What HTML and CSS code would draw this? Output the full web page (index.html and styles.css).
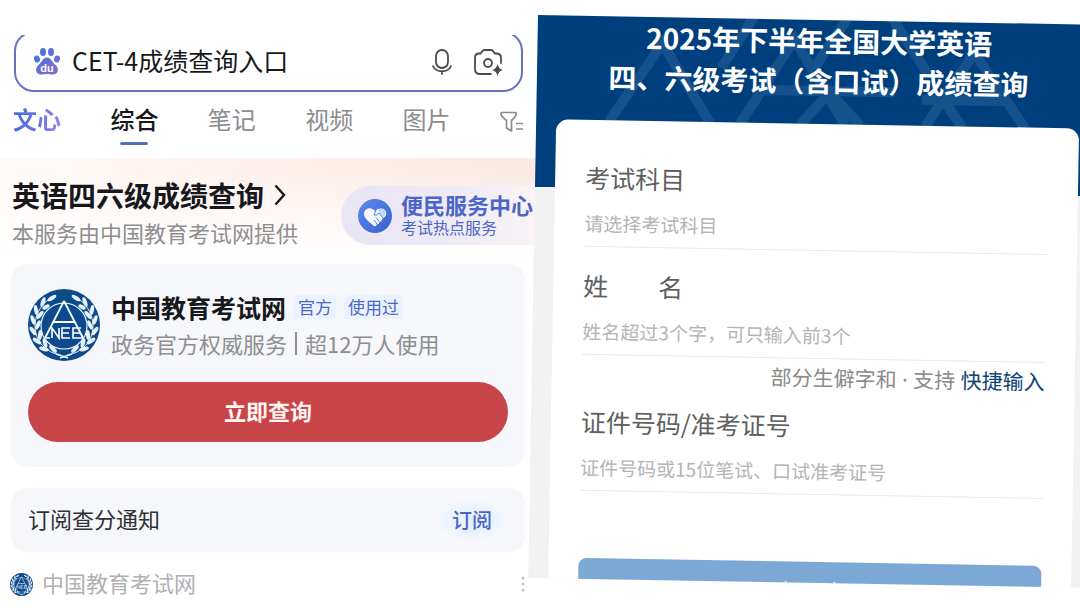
FILE: index.html
```
<!DOCTYPE html>
<html lang="zh-CN">
<head>
    <meta charset="UTF-8">
    <meta name="viewport" content="width=device-width, initial-scale=1.0">
    <title>CET-4成绩查询入口</title>
    <link rel="stylesheet" href="styles.css">
</head>
<body>
    <!-- Shared emblem -->
    <svg class="defs" width="0" height="0" aria-hidden="true">
        <symbol id="emblem" viewBox="0 0 72 72">
            <circle cx="36" cy="36" r="36" fill="#0d4a8c"/>
            <circle cx="36" cy="37" r="23" fill="none" stroke="#e6f1fa" stroke-width="1.2"/>
            <path d="M36 12 L17 49 M36 12 L55 49 M26 33 H46" fill="none" stroke="#fff" stroke-width="1.8"/>
            <path d="M18 49 H22 M24 49 V39 L31 49 V39 M42 39 H34 V49 H42 M34 44 H41 M53 39 H45 V49 H55 M45 44 H52" fill="none" stroke="#fff" stroke-width="1.6"/>
            <g id="branch" fill="#e6f1fa">
                <path d="M33 66 C18 64 7 52 7 37 C7 27 12 17 20 11" fill="none" stroke="#e6f1fa" stroke-width="1"/>
                <ellipse cx="24" cy="9" rx="5" ry="2" transform="rotate(-32 24 9)"/>
                <ellipse cx="15" cy="13" rx="5" ry="2" transform="rotate(-70 15 13)"/>
                <ellipse cx="18" cy="18" rx="4" ry="2" transform="rotate(-30 18 18)"/>
                <ellipse cx="8" cy="21" rx="5" ry="2" transform="rotate(-100 8 21)"/>
                <ellipse cx="12" cy="26" rx="5" ry="2" transform="rotate(-50 12 26)"/>
                <ellipse cx="5" cy="31" rx="5" ry="2" transform="rotate(70 5 31)"/>
                <ellipse cx="10" cy="36" rx="5" ry="2" transform="rotate(-65 10 36)"/>
                <ellipse cx="5" cy="42" rx="5" ry="2" transform="rotate(55 5 42)"/>
                <ellipse cx="12" cy="46" rx="5" ry="2" transform="rotate(-85 12 46)"/>
                <ellipse cx="9" cy="52" rx="5" ry="2" transform="rotate(35 9 52)"/>
                <ellipse cx="17" cy="54" rx="5" ry="2" transform="rotate(75 17 54)"/>
                <ellipse cx="16" cy="60" rx="5" ry="2" transform="rotate(15 16 60)"/>
                <ellipse cx="25" cy="60" rx="5" ry="2" transform="rotate(45 25 60)"/>
                <path d="M28 65 L40 69" stroke="#e6f1fa" stroke-width="1.5"/>
            </g>
            <use href="#branch" transform="translate(72 0) scale(-1 1)"/>
        </symbol>
    </svg>

    <main class="search-page">
        <div class="search-wrap">
            <form class="search-box">
                <svg class="paw" viewBox="0 0 26 27" aria-hidden="true">
                    <defs>
                        <linearGradient id="pawFill" x1="0" y1="0" x2="26" y2="27" gradientUnits="userSpaceOnUse">
                            <stop offset="0" stop-color="#3f74e0"/>
                            <stop offset="1" stop-color="#8a6bcc"/>
                        </linearGradient>
                    </defs>
                    <g fill="url(#pawFill)">
                        <ellipse cx="9" cy="4" rx="3" ry="4"/>
                        <ellipse cx="17" cy="4" rx="3" ry="4"/>
                        <ellipse cx="3" cy="11" rx="3" ry="3.6" transform="rotate(-15 3 11)"/>
                        <ellipse cx="23" cy="11" rx="3" ry="3.6" transform="rotate(15 23 11)"/>
                        <path d="M13 9.500 C17 9.500 18 14 21 16.500 C26 20.500 24 26.500 19 26.500 C16.500 26.500 15 26 13 26 C11 26 9.500 26.500 7 26.500 C2 26.500 0 20.500 5 16.500 C8 14 9 9.500 13 9.500 Z"/>
                    </g>
                    <text class="paw-text" x="13" y="24" text-anchor="middle">du</text>
                </svg>
                <input class="search-input" type="text" aria-label="搜索" value="CET-4成绩查询入口">
                <button class="icon-button" type="button" aria-label="语音">
                    <svg width="22" height="28" viewBox="0 0 22 28" fill="none" stroke="#4b4b4d" stroke-width="1.8" stroke-linecap="round">
                        <rect x="5" y="2" width="12" height="18" rx="6"/>
                        <path d="M2 18 C5 25 17 25 20 18 M11 23.500 V26"/>
                    </svg>
                </button>
                <button class="icon-button" type="button" aria-label="拍照">
                    <svg width="30" height="28" viewBox="0 0 30 28" fill="none" stroke="#4b4b4d" stroke-width="1.8" stroke-linecap="round">
                        <path d="M18 26 H7 Q2 26 2 21 V10 Q2 5.500 6 5.500 H7.500 L9.500 3 Q10.200 2 11.500 2 H18 Q19.300 2 20 3 L22 5.500 H23.500 Q28 5.500 28 10 V15"/>
                        <circle cx="15" cy="15" r="4"/>
                        <path d="M24.500 16 Q25.500 21 30 22 Q25.500 23 24.500 28 Q23.500 23 19 22 Q23.500 21 24.500 16 Z" fill="#4b4b4d" stroke="none"/>
                    </svg>
                </button>
            </form>
        </div>

        <nav class="tabs">
            <a class="tab tab-ai" href="#">文心</a>
            <a class="tab tab-active" href="#">综合</a>
            <a class="tab" href="#">笔记</a>
            <a class="tab" href="#">视频</a>
            <a class="tab" href="#">图片</a>
            <button class="icon-button filter" type="button" aria-label="筛选">
                <svg width="24" height="22" viewBox="0 0 24 22" fill="none" stroke="#8b8c90" stroke-width="1.7" stroke-linejoin="round">
                    <path d="M2 1.500 H15 Q16.500 1.500 16 3.500 Q15.500 6 11.500 9.500 V20 L6.500 17 V9.500 Q1.500 5.500 1 3.500 Q.8 1.500 2 1.500 Z"/>
                    <path d="M16 12.500 H23 M16 18 H23"/>
                </svg>
            </button>
        </nav>

        <section class="hero">
            <div class="hero-text">
                <h1 class="hero-title">英语四六级成绩查询
                    <svg width="12" height="22" viewBox="0 0 12 22" fill="none" stroke="#18181c" stroke-width="2.400" aria-hidden="true"><path d="M1.500 1.500 L10 11 L1.500 20.500"/></svg>
                </h1>
                <p class="hero-sub">本服务由中国教育考试网提供</p>
            </div>
            <a class="service" href="#">
                <svg class="service-icon" viewBox="0 0 34 34" aria-hidden="true">
                    <defs>
                        <linearGradient id="disc" x1="0" y1="0" x2="1" y2="1">
                            <stop offset="0" stop-color="#5b8bee"/>
                            <stop offset="1" stop-color="#3c5fd0"/>
                        </linearGradient>
                    </defs>
                    <circle cx="17" cy="17" r="17" fill="url(#disc)"/>
                    <path d="M17 12 C13 7 6 9 6 15 C6 19 11 23 16 27 Q18 28 19 25 Q21 26 21.500 23 Q24 23 24 20 C27 18 29 16 28 13 C27 9 21 8 17 12 Z" fill="#f4f8ff"/>
                    <path d="M21 13 L25 18 Q28 16 28 13 C27 10 23 9 20 11 Z" fill="#c4d7fa"/>
                    <path d="M18 11 L16 16 Q19 17 21 14 L25 19 M19 25 L16 21 M21.500 23 L18 18.500" fill="none" stroke="#5b82de" stroke-width="1"/>
                </svg>
                <span class="service-text">
                    <strong class="service-name">便民服务中心</strong>
                    <span class="service-note">考试热点服务</span>
                </span>
            </a>
        </section>

        <section class="card">
            <div class="site">
                <svg class="site-logo" aria-hidden="true"><use href="#emblem"/></svg>
                <div class="site-info">
                    <div class="site-head">
                        <h2 class="site-name">中国教育考试网</h2>
                        <span class="tag">官方</span>
                        <span class="tag">使用过</span>
                    </div>
                    <p class="site-desc">政务官方权威服务<span class="divider"></span>超12万人使用</p>
                </div>
            </div>
            <button class="query-button" type="button">立即查询</button>
        </section>

        <section class="card notice">
            <span class="notice-text">订阅查分通知</span>
            <button class="subscribe" type="button">订阅</button>
        </section>

        <footer class="source">
            <svg class="source-logo" aria-hidden="true"><use href="#emblem"/></svg>
            <span>中国教育考试网</span>
            <button class="icon-button more" type="button" aria-label="更多">
                <svg width="4" height="17" viewBox="0 0 4 17" fill="#c4c4c6"><circle cx="2" cy="2" r="1.600"/><circle cx="2" cy="8" r="1.600"/><circle cx="2" cy="14" r="1.600"/></svg>
            </button>
        </footer>
    </main>

    <aside class="exam-page">
        <header class="exam-header">
            <svg class="pattern" viewBox="0 0 563 172" fill="none" stroke="#5b93c9" stroke-width="10" aria-hidden="true">
                <path d="M73 105 L125 26 L174 105"/>
                <path d="M217 -4 L184 50"/>
                <path d="M204 105 L257 20 L309 105 M222 71 H358"/>
                <path d="M264 105 L293 72 L324 105"/>
                <path d="M311 -4 L276 50 M352 -6 L392 54"/>
                <path d="M389 105 L437 30 L489 105 M385 78 H472 M407 78 L426 105"/>
            </svg>
            <h2 class="exam-title">2025年下半年全国大学英语<br>四、六级考试（含口试）成绩查询</h2>
        </header>
        <form class="exam-form">
            <div class="field">
                <label class="field-label" for="subject">考试科目</label>
                <select class="field-input" id="subject">
                    <option>请选择考试科目</option>
                </select>
            </div>
            <div class="field">
                <label class="field-label" for="name">姓　　名</label>
                <input class="field-input" id="name" type="text" placeholder="姓名超过3个字，可只输入前3个">
                <p class="hint">部分生僻字和 · 支持 <a class="hint-link" href="#">快捷输入</a></p>
            </div>
            <div class="field">
                <label class="field-label" for="number">证件号码/准考证号</label>
                <input class="field-input" id="number" type="text" placeholder="证件号码或15位笔试、口试准考证号">
            </div>
            <button class="submit" type="button">查　询</button>
        </form>
    </aside>
</body>
</html>
```

FILE: styles.css
```
* {
    box-sizing: border-box;
}

body {
    display: flex;
    height: 100vh;
    margin: 0;
    overflow: hidden;
    background: #fff;
    color: #18181c;
    font-family: "Noto Sans CJK SC", sans-serif;
}

h1, h2, p {
    margin: 0;
}

a {
    color: inherit;
    text-decoration: none;
}

button, input, select {
    margin: 0;
    padding: 0;
    border: 0;
    background: none;
    color: inherit;
    font-family: inherit;
}

svg {
    display: block;
    flex: none;
}

.defs {
    position: absolute;
}

.icon-button {
    display: flex;
    align-items: center;
}

/* Search results page */
.search-page {
    flex: 0 0 50%;
    padding-top: 35px;
}

.search-wrap {
    margin: 0 17px 0 14px;
    overflow: hidden;
}

.search-box {
    display: flex;
    align-items: center;
    gap: 20px;
    height: 61px;
    margin-top: -4px;
    padding: 0 18px;
    border: 2px solid #6672c4;
    border-radius: 20px;
}

.paw {
    width: 26px;
    height: 27px;
}

.paw-text {
    fill: #fff;
    font: bold 11px "Liberation Sans", sans-serif;
}

.search-input {
    flex: 1;
    min-width: 0;
    margin-left: -8px;
    padding-bottom: 4px;
    font-size: 25px;
    line-height: 36px;
    outline: none;
}

.tabs {
    display: flex;
    justify-content: space-between;
    margin: 13px 16px 13px 13px;
}

.tab {
    padding-bottom: 12px;
    color: #8b8c90;
    font-size: 24px;
    line-height: 28px;
}

.tab-ai {
    background: linear-gradient(100deg, #3f6bd8, #9a80e6);
    background-clip: text;
    color: transparent;
    font-weight: bold;
}

.tab-active {
    position: relative;
    color: #18181c;
    font-weight: 500;
}

.tab-active::after {
    content: "";
    position: absolute;
    right: 10px;
    bottom: 0;
    left: 10px;
    height: 3px;
    border-radius: 2px;
    background: #5a6cc0;
}

.filter {
    height: 34px;
}

.hero {
    display: flex;
    justify-content: space-between;
    padding: 18px 0 14px 12px;
    background:
        linear-gradient(to bottom, transparent 10%, #fff 95%),
        linear-gradient(to right, #fffaf8, #fdeee9 60%, #fde8e2);
}

.hero-title {
    display: flex;
    align-items: center;
    gap: 10px;
    font-size: 28px;
    line-height: 38px;
}

.hero-sub {
    color: #8e8e90;
    font-size: 22px;
    line-height: 36px;
}

.service {
    display: flex;
    align-items: center;
    gap: 9px;
    height: 59px;
    margin: 10px 0 -5px;
    padding: 0 7px 0 17px;
    border-radius: 30px 0 0 30px;
    background: linear-gradient(to right, #e8e5f4, #efebf5 60%, #faf4f6);
    color: #4a66c8;
}

.service-icon {
    width: 34px;
    height: 34px;
}

.service-text {
    display: flex;
    flex-direction: column;
    padding-bottom: 4px;
}

.service-name {
    font-size: 22px;
    font-weight: bold;
    line-height: 26px;
}

.service-note {
    font-size: 16px;
    line-height: 20px;
}

.card {
    margin: 0 15px 0 11px;
    padding: 25px 17px;
    border-radius: 16px;
    background: #f5f7fb;
}

.site {
    display: flex;
    align-items: center;
    gap: 11px;
}

.site-logo {
    width: 72px;
    height: 72px;
}

.site-head {
    display: flex;
    align-items: center;
    gap: 8px;
}

.site-name {
    font-size: 25px;
    line-height: 36px;
}

.tag {
    padding: 0 4px;
    border-radius: 4px;
    background: #eaf3fd;
    color: #4a66c8;
    font-size: 17px;
    line-height: 24px;
}

.site-desc {
    display: flex;
    align-items: center;
    color: #8e8e90;
    font-size: 22px;
    line-height: 36px;
}

.divider {
    width: 2px;
    height: 23px;
    margin: 0 8px;
    background: #8e8e90;
}

.query-button {
    width: 100%;
    height: 60px;
    margin-top: 21px;
    padding-bottom: 4px;
    border-radius: 30px;
    background: #c74449;
    color: #fff3f0;
    font-size: 22px;
    font-weight: bold;
}

.notice {
    display: flex;
    align-items: center;
    justify-content: space-between;
    margin-top: 21px;
    padding: 11px 17px;
}

.notice-text {
    padding-bottom: 4px;
    color: #303134;
    font-size: 22px;
    line-height: 32px;
}

.subscribe {
    height: 42px;
    padding: 0 16px 2px;
    border-radius: 21px;
    background: radial-gradient(closest-side, #e2effd, #eaf3fd 60%, #f5f7fb);
    color: #4a66c8;
    font-size: 20px;
    font-weight: 500;
}

.source {
    display: flex;
    align-items: center;
    gap: 9px;
    margin: 12px 15px 0 10px;
    color: #b0b0b2;
    font-size: 22px;
    line-height: 36px;
}

.source span {
    padding-bottom: 4px;
}

.source-logo {
    width: 23px;
    height: 23px;
}

.more {
    margin-left: auto;
}

/* Exam query page, laid at a slight tilt and running off the right edge */
.exam-page {
    flex: 1;
    margin: 15px -21px 30px -2px;
    overflow: hidden;
    background: linear-gradient(#003f7d 172px, #f2f2f2 172px);
    transform: rotate(1deg);
    transform-origin: 0 0;
}

.exam-header {
    position: relative;
    height: 104px;
}

.pattern {
    position: absolute;
    top: 0;
    left: 0;
    width: 100%;
    opacity: .22;
}

.exam-title {
    position: relative;
    color: #fff;
    font-size: 28px;
    line-height: 40px;
    text-align: center;
}

.exam-form {
    position: relative;
    height: 100%;
    margin: 0 20px;
    padding: 40px 30px 0;
    border-radius: 12px 12px 0 0;
    background: #fff;
}

.field {
    margin-bottom: 21px;
}

.field-label {
    display: block;
    margin-bottom: 6px;
    color: #5f5f61;
    font-size: 25px;
    line-height: 34px;
}

.field-input {
    display: block;
    width: 100%;
    height: 47px;
    padding-bottom: 2px;
    border-bottom: 1px solid #e9e9e9;
    border-radius: 0;
    appearance: none;
    color: #b4b4b6;
    font-size: 19px;
    outline: none;
}

.field-input::placeholder {
    color: #b4b4b6;
}

.hint {
    margin: 4px 0 -6px;
    color: #8a8a8c;
    font-family: "Noto Sans", "Noto Sans CJK SC", sans-serif;
    font-size: 21px;
    line-height: 30px;
    text-align: right;
}

.hint-link {
    color: #0d4478;
}

.submit {
    width: 100%;
    height: 58px;
    margin-top: 46px;
    border-radius: 8px;
    background: #7ba8d5;
    color: #fff;
    font-size: 24px;
}
```
